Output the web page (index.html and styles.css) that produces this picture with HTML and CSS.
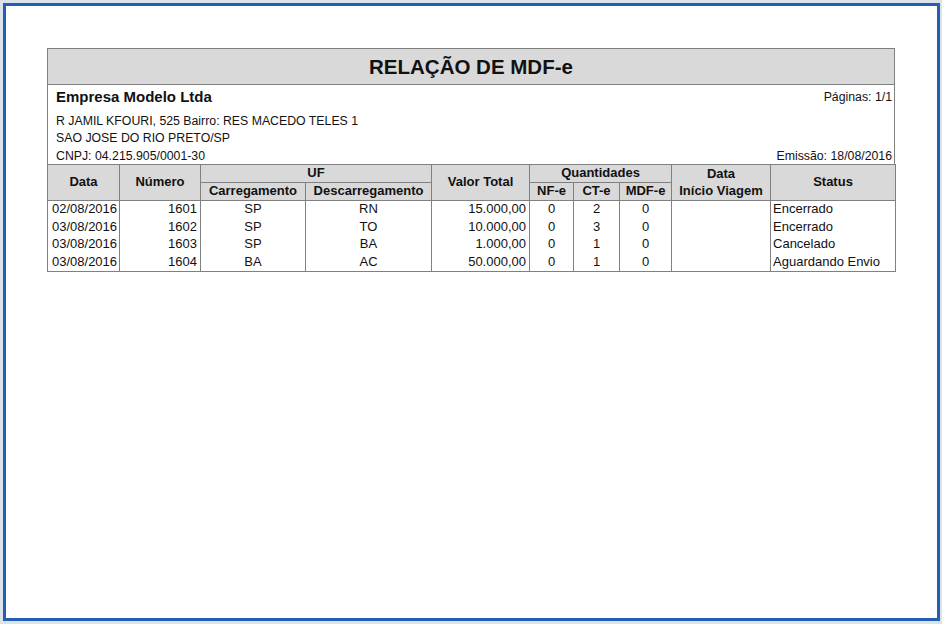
FILE: index.html
```html
<!DOCTYPE html>
<html lang="pt-BR">
<head>
<meta charset="utf-8">
<title>Relação de MDF-e</title>
<link rel="stylesheet" href="styles.css">
</head>
<body>
<div class="frame">
  <div class="report">
    <div class="title">RELAÇÃO DE MDF-e</div>
    <div class="info">
      <div class="info-row first">
        <span class="company">Empresa Modelo Ltda</span>
        <span>Páginas: 1/1</span>
      </div>
      <div class="info-row addr">R JAMIL KFOURI, 525 Bairro: RES MACEDO TELES 1</div>
      <div class="info-row">SAO JOSE DO RIO PRETO/SP</div>
      <div class="info-row last">
        <span>CNPJ: 04.215.905/0001-30</span>
        <span>Emissão: 18/08/2016</span>
      </div>
    </div>
    <table class="grid">
      <colgroup>
        <col class="c-data"><col class="c-num"><col class="c-car"><col class="c-desc"><col class="c-val">
        <col class="c-nf"><col class="c-ct"><col class="c-mdf"><col class="c-ini"><col class="c-st">
      </colgroup>
      <thead>
        <tr>
          <th rowspan="2">Data</th>
          <th rowspan="2">Número</th>
          <th colspan="2">UF</th>
          <th rowspan="2">Valor Total</th>
          <th colspan="3">Quantidades</th>
          <th rowspan="2" class="two">Data<br>Início Viagem</th>
          <th rowspan="2">Status</th>
        </tr>
        <tr>
          <th>Carregamento</th>
          <th>Descarregamento</th>
          <th>NF-e</th>
          <th>CT-e</th>
          <th>MDF-e</th>
        </tr>
      </thead>
      <tbody>
        <tr><td class="l">02/08/2016</td><td class="r">1601</td><td>SP</td><td>RN</td><td class="r">15.000,00</td><td>0</td><td>2</td><td>0</td><td></td><td class="s">Encerrado</td></tr>
        <tr><td class="l">03/08/2016</td><td class="r">1602</td><td>SP</td><td>TO</td><td class="r">10.000,00</td><td>0</td><td>3</td><td>0</td><td></td><td class="s">Encerrado</td></tr>
        <tr><td class="l">03/08/2016</td><td class="r">1603</td><td>SP</td><td>BA</td><td class="r">1.000,00</td><td>0</td><td>1</td><td>0</td><td></td><td class="s">Cancelado</td></tr>
        <tr><td class="l">03/08/2016</td><td class="r">1604</td><td>BA</td><td>AC</td><td class="r">50.000,00</td><td>0</td><td>1</td><td>0</td><td></td><td class="s">Aguardando Envio</td></tr>
      </tbody>
    </table>
  </div>
</div>
</body>
</html>
```

FILE: styles.css
```css
html, body {
  margin: 0;
  padding: 0;
  background: #dbe2ea;
}
body {
  font-family: "Liberation Sans", Arial, sans-serif;
  color: #111;
  width: 942px;
  height: 624px;
  overflow: hidden;
}
.frame {
  box-sizing: border-box;
  margin: 3px 0 0 3px;
  width: 937px;
  height: 618px;
  border: 3px solid #2560b0;
  background: #fff;
  padding: 42px 0 0 41px;
}
.report {
  width: 848px;
}
.title {
  box-sizing: border-box;
  height: 37px;
  border: 1px solid #808080;
  background: #d9d9d9;
  text-align: center;
  font-weight: bold;
  font-size: 20.5px;
  line-height: 35px;
}
.info {
  box-sizing: border-box;
  border-left: 1px solid #808080;
  border-right: 1px solid #808080;
  height: 79px;
  padding: 0 2px 0 8px;
  font-size: 12.3px;
}
.info-row {
  display: flex;
  justify-content: space-between;
  line-height: 18px;
  height: 18px;
}
.info-row.first {
  height: 24px;
  line-height: 24px;
  margin-bottom: 2px;
}
.info-row.addr {
  line-height: 20px;
}
.info-row.last {
  height: 17px;
  line-height: 18px;
}
.company {
  font-size: 15px;
  font-weight: bold;
}
.grid {
  border-collapse: collapse;
  table-layout: fixed;
  width: 848px;
  font-size: 13px;
  border: 1px solid #808080;
}
.c-data { width: 72px; }
.c-num { width: 81px; }
.c-car { width: 105px; }
.c-desc { width: 126px; }
.c-val { width: 98px; }
.c-nf { width: 44px; }
.c-ct { width: 46px; }
.c-mdf { width: 52px; }
.c-ini { width: 99px; }
.c-st { width: 125px; }
.grid th {
  background: #d9d9d9;
  border: 1px solid #808080;
  font-weight: bold;
  font-size: 13px;
  height: 16px;
  line-height: 16px;
  padding: 0 0 1px 0;
  text-align: center;
  white-space: nowrap;
  overflow: hidden;
}
.grid th.two {
  line-height: 17px;
}
.grid td {
  border-left: 1px solid #808080;
  border-right: 1px solid #808080;
  height: 17.5px;
  line-height: 16px;
  vertical-align: top;
  padding: 0;
  text-align: center;
  white-space: nowrap;
  overflow: hidden;
}
.grid td.l { text-align: left; padding-left: 4px; }
.grid td.r { text-align: right; padding-right: 3px; }
.grid td.s { text-align: left; padding-left: 2px; }
```
